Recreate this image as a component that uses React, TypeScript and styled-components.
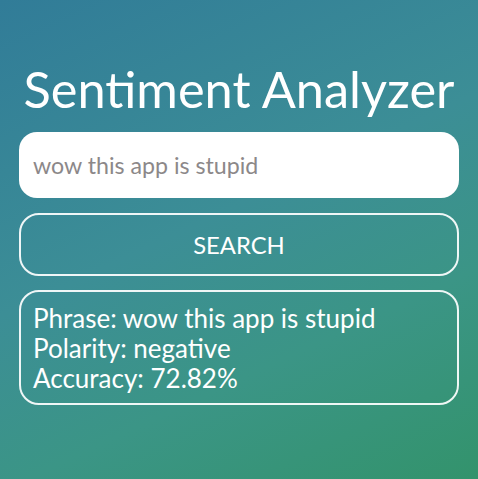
import React, { FC, useState } from 'react'
import styled, { createGlobalStyle } from 'styled-components'

const GlobalStyle = createGlobalStyle`
  html, body {
    margin: 0;
    padding: 0;
    height: 100%;
  }
  body {
    font-family: Lato, "Open Sans", sans-serif;
  }
  #root {
    height: 100%;
  }
`

const Page = styled.div`
  box-sizing: border-box;
  width: 100%;
  min-height: 100vh;
  padding: 59px 19px 0;
  background: linear-gradient(155deg, #317c98 0%, #3c8e96 45%, #3b9586 70%, #33936c 100%);
  color: #fff;
  display: flex;
  flex-direction: column;
`

const Title = styled.h1`
  margin: 0 0 13px;
  font-size: 50.5px;
  font-weight: 400;
  line-height: 60px;
  text-align: center;
  white-space: nowrap;
`

const SearchInput = styled.input`
  box-sizing: border-box;
  width: 100%;
  height: 66px;
  border: none;
  border-radius: 18px;
  padding: 0 14px;
  font-family: inherit;
  font-size: 23.2px;
  color: #333;
  background: #fff;
  outline: none;
  margin-bottom: 15px;

  &::placeholder {
    color: #8c8889;
  }
`

const SearchButton = styled.button`
  box-sizing: border-box;
  width: 100%;
  height: 63px;
  border: 2px solid rgba(255, 255, 255, 0.92);
  border-radius: 20px;
  background: transparent;
  color: #fff;
  font-family: inherit;
  font-size: 23.8px;
  cursor: pointer;
  margin-bottom: 14px;
`

const Result = styled.div`
  box-sizing: border-box;
  width: 100%;
  border: 2px solid rgba(255, 255, 255, 0.92);
  border-radius: 20px;
  padding: 11px 12px 10px;
  font-size: 26px;
  line-height: 30px;
`

const Line = styled.div`
  white-space: nowrap;
`

const App: FC = () => {
  const [text, setText] = useState('')

  return (
    <>
      <GlobalStyle />
      <Page>
        <Title>Sentiment Analyzer</Title>
        <SearchInput
          value={text}
          placeholder="wow this app is stupid"
          onChange={(e) => setText(e.target.value)}
        />
        <SearchButton type="button">SEARCH</SearchButton>
        <Result>
          <Line>Phrase: wow this app is stupid</Line>
          <Line>Polarity: negative</Line>
          <Line>Accuracy: 72.82%</Line>
        </Result>
      </Page>
    </>
  )
}

export default App
